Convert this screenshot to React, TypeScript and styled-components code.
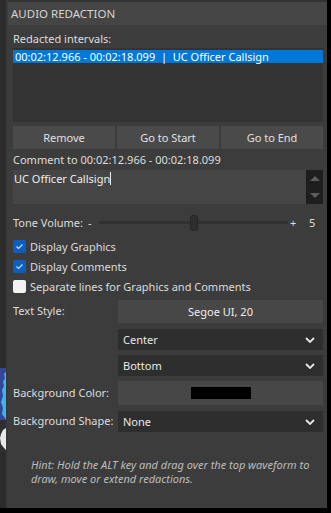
import styled, { createGlobalStyle } from "styled-components";

const GlobalStyle = createGlobalStyle`
  html, body {
    margin: 0;
    padding: 0;
    background: #000;
  }
  body {
    font-family: "Noto Sans", "Open Sans", sans-serif;
    font-size: 11px;
    color: #dcdcdc;
  }
`;

const Screen = styled.div`
  display: flex;
  width: 331px;
  height: 513px;
  background: #000;
  overflow: hidden;
`;

const Gutter = styled.div`
  width: 6px;
  height: 508px;
  background: #2b2b2b;
  display: flex;
  flex-direction: column;
  border-right: 2px solid #393939;
`;

const GutterTop = styled.div`
  height: 368px;
`;

const Panel = styled.div`
  width: 319px;
  height: 508px;
  background: #3c3c3c;
  display: flex;
  flex-direction: column;
`;

const TopEdge = styled.div`
  height: 2px;
  background: #333333;
`;

const Header = styled.div`
  height: 23px;
  background: #454545;
  display: flex;
  align-items: center;
  padding-left: 3px;
  font-size: 11.5px;
  color: #d4d4d4;
`;

const Body = styled.div`
  display: flex;
  flex-direction: column;
  padding: 5px 4px 0 5px;
`;

const Label = styled.div`
  height: 18px;
  line-height: 18px;
  color: #dedede;
  white-space: nowrap;
`;

const ListBox = styled.div`
  height: 72px;
  background: #333333;
  padding-top: 2px;
  margin-bottom: 4px;
`;

const ListItem = styled.div`
  height: 13px;
  line-height: 13px;
  background: #0078d7;
  color: #ffffff;
  padding-left: 2px;
  white-space: pre;
`;

const ButtonRow = styled.div`
  display: grid;
  grid-template-columns: 1fr 1fr 1fr;
  gap: 2px;
  height: 23px;
  margin-bottom: 2px;
`;

const Button = styled.div`
  background: #4a4a4a;
  display: flex;
  align-items: center;
  justify-content: center;
  color: #e0e0e0;
`;

const CommentBox = styled.div`
  display: flex;
  height: 34px;
  background: #454545;
  margin-top: 1px;
`;

const CommentText = styled.div`
  flex: 1;
  padding: 1px 1px;
  line-height: 16px;
  color: #eeeeee;
`;

const Caret = styled.span`
  display: inline-block;
  width: 1px;
  height: 13px;
  background: #eeeeee;
  vertical-align: -2px;
`;

const ScrollBar = styled.div`
  width: 17px;
  background: #1e1e1e;
  display: flex;
  flex-direction: column;
  justify-content: space-between;
  align-items: center;
  padding: 6px 0;
`;

const Arrow = styled.div<{ $up?: boolean }>`
  width: 0;
  height: 0;
  border-left: 5px solid transparent;
  border-right: 5px solid transparent;
  ${(p) =>
    p.$up
      ? "border-bottom: 5px solid #5c5c5c;"
      : "border-top: 5px solid #5c5c5c;"}
`;

const SliderRow = styled.div`
  display: flex;
  align-items: center;
  height: 24px;
  margin-top: 6px;
  margin-bottom: 2px;
`;

const SliderLabel = styled.span`
  width: 75px;
`;

const Minus = styled.span`
  width: 11px;
`;

const Track = styled.div`
  position: relative;
  width: 189px;
  height: 3px;
  background: #303030;
`;

const Thumb = styled.div`
  position: absolute;
  left: 91px;
  top: -6px;
  width: 6px;
  height: 14px;
  background: #2e2e2e;
  border: 1px solid #262626;
  border-radius: 3px;
`;

const Plus = styled.span`
  margin-left: 2px;
  width: 19px;
`;

const CheckRow = styled.div`
  display: flex;
  align-items: center;
  height: 20px;
  gap: 4px;
  white-space: nowrap;
`;

const Box = styled.div<{ $on?: boolean }>`
  width: 13px;
  height: 13px;
  border-radius: 2px;
  background: ${(p) => (p.$on ? "#0b5fc0" : "#f2f2f2")};
  display: flex;
  align-items: center;
  justify-content: center;
`;

const FieldRow = styled.div<{ $gap?: number }>`
  display: grid;
  grid-template-columns: 105px 1fr;
  margin-top: ${(p) => p.$gap ?? 5}px;
  align-items: center;
`;

const FieldLabel = styled.div`
  color: #dcdcdc;
  white-space: nowrap;
  padding-bottom: 2px;
`;

const FieldButton = styled.div<{ $h: number }>`
  height: ${(p) => p.$h}px;
  background: #474747;
  display: flex;
  align-items: center;
  justify-content: center;
  color: #eeeeee;
`;

const Select = styled.div`
  height: 21px;
  background: #2e2e2e;
  display: flex;
  align-items: center;
  justify-content: space-between;
  padding: 0 8px 0 5px;
  color: #e8e8e8;
`;

const Swatch = styled.div`
  width: 60px;
  height: 12px;
  background: #000;
`;

const Hint = styled.div`
  margin-top: 26px;
  padding-left: 18px;
  font-style: italic;
  color: #bcbcbc;
  font-size: 11px;
  line-height: 14px;
`;

const Chevron = () => (
  <svg width="10" height="6" viewBox="0 0 10 6">
    <path d="M1 1 L5 5 L9 1" stroke="#e6e6e6" strokeWidth="1.8" fill="none" />
  </svg>
);

const Tick = () => (
  <svg width="9" height="7" viewBox="0 0 9 7">
    <path d="M1.5 3.5 L3.5 5.5 L7.5 1.5" stroke="#cfe0f5" strokeWidth="1.1" fill="none" />
  </svg>
);

const Waveform = () => (
  <svg width="6" height="84" viewBox="0 0 6 84">
    <rect x="0" y="0" width="6" height="52" fill="#35479a" />
    <path
      d="M6 4 L4 6 L5 10 L3 14 L4 18 L2 22 L3 28 L1 34 L3 40 L2 46 L5 50 L6 52 Z"
      fill="#3ab6ea"
    />
    <rect x="0" y="52" width="6" height="32" fill="#2f2f2f" />
    <path d="M6 60 L3 62 L1 66 L0 70 L1 76 L4 80 L6 82 Z" fill="#e8e8e8" />
  </svg>
);

export default function App() {
  return (
    <>
      <GlobalStyle />
      <Screen>
        <Gutter>
          <GutterTop />
          <Waveform />
        </Gutter>
        <Panel>
          <TopEdge />
          <Header>AUDIO REDACTION</Header>
          <Body>
            <Label>Redacted intervals:</Label>
            <ListBox>
              <ListItem>00:02:12.966 - 00:02:18.099  |  UC Officer Callsign</ListItem>
            </ListBox>
            <ButtonRow>
              <Button>Remove</Button>
              <Button>Go to Start</Button>
              <Button>Go to End</Button>
            </ButtonRow>
            <Label>Comment to 00:02:12.966 - 00:02:18.099</Label>
            <CommentBox>
              <CommentText>
                UC Officer Callsign
                <Caret />
              </CommentText>
              <ScrollBar>
                <Arrow $up />
                <Arrow />
              </ScrollBar>
            </CommentBox>
            <SliderRow>
              <SliderLabel>Tone Volume:</SliderLabel>
              <Minus>-</Minus>
              <Track>
                <Thumb />
              </Track>
              <Plus>+</Plus>
              <span>5</span>
            </SliderRow>
            <CheckRow>
              <Box $on>
                <Tick />
              </Box>
              Display Graphics
            </CheckRow>
            <CheckRow>
              <Box $on>
                <Tick />
              </Box>
              Display Comments
            </CheckRow>
            <CheckRow>
              <Box />
              Separate lines for Graphics and Comments
            </CheckRow>
            <FieldRow $gap={4}>
              <FieldLabel>Text Style:</FieldLabel>
              <FieldButton $h={23}>Segoe UI, 20</FieldButton>
            </FieldRow>
            <FieldRow $gap={6}>
              <span />
              <Select>
                Center
                <Chevron />
              </Select>
            </FieldRow>
            <FieldRow>
              <span />
              <Select>
                Bottom
                <Chevron />
              </Select>
            </FieldRow>
            <FieldRow>
              <FieldLabel>Background Color:</FieldLabel>
              <FieldButton $h={24}>
                <Swatch />
              </FieldButton>
            </FieldRow>
            <FieldRow $gap={6}>
              <FieldLabel>Background Shape:</FieldLabel>
              <Select>
                None
                <Chevron />
              </Select>
            </FieldRow>
            <Hint>
              Hint: Hold the ALT key and drag over the top waveform to draw, move or
              extend redactions.
            </Hint>
          </Body>
        </Panel>
      </Screen>
    </>
  );
}
